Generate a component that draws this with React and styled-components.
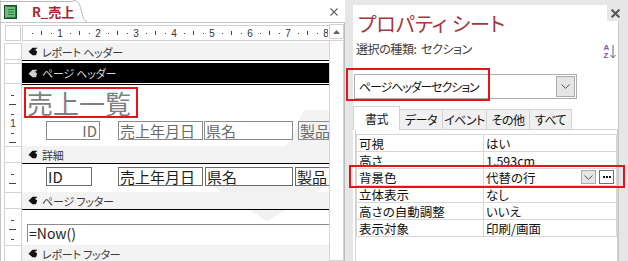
import React from 'react';
import styled, { createGlobalStyle } from 'styled-components';

const FONT = `"Noto Sans CJK JP", "Noto Sans", sans-serif`;

const Global = createGlobalStyle`
  html, body { margin: 0; padding: 0; background: #e6e6e6; }
  body { font-family: ${FONT}; font-feature-settings: "palt"; }
  * { box-sizing: border-box; }
`;

const Root = styled.div`
  position: relative;
  width: 628px;
  height: 261px;
  overflow: hidden;
  display: flex;
  background: #e6e6e6;
`;

/* ---------------- Left: report designer ---------------- */
const Editor = styled.div`
  width: 345px;
  height: 261px;
  flex: none;
  display: flex;
  flex-direction: column;
  background: #fff;
  border-left: 1px solid #c6c6c6;
`;

const DocTabBar = styled.div`
  height: 23px;
  flex: none;
  display: flex;
  align-items: flex-end;
  border-bottom: 1px solid #c6c6c6;
`;

const DocTab = styled.div`
  height: 21px;
  width: 72px;
  flex: none;
  display: flex;
  align-items: center;
  padding-left: 3px;
  border-top: 1px solid #b8b8b8;
  background: #fff;
  white-space: nowrap;
`;

const DocTabTitle = styled.span`
  margin-left: 15px;
  font-size: 13px;
  line-height: 16px;
  font-weight: 700;
  color: #a4262c;
  white-space: nowrap;
  position: relative;
  z-index: 1;
`;

const DocClose = styled.div`
  margin-left: auto;
  align-self: flex-start;
  margin-top: 8px;
  margin-right: 7px;
  width: 8px;
  height: 8px;
  display: flex;
`;

const EditorBody = styled.div`
  flex: 1;
  display: flex;
  min-height: 0;
`;

const ContentColumn = styled.div`
  position: relative;
  width: 328px;
  display: flex;
  flex-direction: column;
  overflow: hidden;
`;

const Watermark = styled.svg`
  position: absolute;
  left: 0;
  top: 0;
  z-index: 0;
`;

const RulerRow = styled.div`
  position: relative;
  z-index: 1;
  display: flex;
  height: 16px;
  margin-top: 2px;
  margin-bottom: 2px;
  flex: none;
`;

const CornerBox = styled.div`
  width: 16px;
  margin-left: 4px;
  margin-right: 1px;
  border: 1px solid #d0d0d0;
  background: #fff;
`;

const HRuler = styled.div`
  width: 307px;
  border: 1px solid #d0d0d0;
  border-right: none;
  background: #fff;
  display: flex;
`;

const Row = styled.div`
  position: relative;
  z-index: 1;
  display: flex;
  flex: none;
  height: ${(p) => p.$h}px;
`;

const VCell = styled.div`
  width: 18px;
  margin-left: 3px;
  flex: none;
  background: #fff;
  border-left: 1px solid #d4d4d4;
  border-right: 1px solid #d4d4d4;
  ${(p) => p.$box && 'border-top: 1px solid #d4d4d4; border-bottom: 1px solid #d4d4d4;'}
  display: flex;
`;

const SectionBar = styled.div`
  width: 307px;
  height: 100%;
  display: flex;
  align-items: center;
  gap: 4px;
  padding-left: 6px;
  font-size: 11px;
  letter-spacing: -0.2px;
  background: ${(p) => (p.$selected ? '#000' : '#f3f3f3')};
  color: ${(p) => (p.$selected ? '#d8d8d8' : '#3a3a3a')};
  border-bottom: ${(p) => (p.$selected ? '1px solid #fff' : 'none')};
  white-space: nowrap;
`;

const SectionBody = styled.div`
  position: relative;
  width: 307px;
  height: 100%;
  border-top: 1px solid #000;
  overflow: hidden;
`;

const TitleLabel = styled.div`
  position: absolute;
  left: 2px;
  top: 2px;
  width: 114px;
  height: 31px;
  border: 2px solid #e3151a;
  font-size: 26px;
  line-height: 27px;
  padding-left: 1px;
  color: #7f7f7f;
  white-space: nowrap;
`;

const Ctl = styled.div`
  position: absolute;
  left: ${(p) => p.$x}px;
  top: ${(p) => p.$y}px;
  width: ${(p) => p.$w}px;
  height: 19px;
  border: 1px solid ${(p) => (p.$label ? '#8c8c8c' : '#6a6a6a')};
  color: ${(p) => (p.$label ? '#6a6a6a' : '#1e1e1e')};
  font-size: 15px;
  line-height: 17px;
  padding: 0 2px 0 1px;
  white-space: nowrap;
  overflow: hidden;
  text-align: ${(p) => (p.$right ? 'right' : 'left')};
`;

const NowBox = styled.div`
  position: absolute;
  left: 5px;
  top: 14px;
  right: 0;
  height: 18px;
  border-top: 1px solid #8c8c8c;
  border-left: 1px solid #8c8c8c;
  font-size: 14px;
  line-height: 16px;
  padding-left: 1px;
  color: #222;
`;

const Scrollbar = styled.div`
  width: 16px;
  flex: none;
  display: flex;
  flex-direction: column;
  padding-top: 1px;
  border-right: 1px solid #bcbcbc;
  background: #fff;
`;

const ScrollBtn = styled.div`
  height: 15px;
  border: 1px solid #d0d0d0;
  display: flex;
  align-items: center;
  justify-content: center;
  background: #fff;
`;

const ScrollThumb = styled.div`
  flex: 1;
  margin-top: 1px;
  border: 1px solid #d4d4d4;
  background: #fff;
`;

/* ---------------- Right: property sheet ---------------- */
const Gap = styled.div`
  width: 8px;
  flex: none;
`;

const PropPanel = styled.div`
  position: relative;
  width: 275px;
  flex: none;
  padding-top: 5px;
  padding-right: 9px;
  background: #e6e6e6;
`;

const PanelBody = styled.div`
  height: 100%;
  background: #fff;
  border-right: 1px solid #c6c6c6;
  display: flex;
  flex-direction: column;
`;

const PanelClose = styled.div`
  position: absolute;
  left: 254px;
  top: 5px;
  width: 16px;
  height: 16px;
  background: #e6e6e6;
  display: flex;
  align-items: center;
  justify-content: center;
`;

const PanelTitle = styled.div`
  margin-top: 6px;
  padding-left: 5px;
  font-size: 20px;
  line-height: 26px;
  color: #a5373b;
  white-space: nowrap;
`;

const SubRow = styled.div`
  margin-top: 2px;
  height: 18px;
  display: flex;
  align-items: center;
  justify-content: space-between;
  padding-left: 3px;
  padding-right: 2px;
  font-size: 12px;
  letter-spacing: -0.4px;
  color: #3a3a3a;
`;

const SortIcon = styled.div`
  display: flex;
  align-items: center;
  gap: 1px;
  margin-top: 8px;
`;

const SortLetters = styled.div`
  display: flex;
  flex-direction: column;
  font-family: "Liberation Sans", sans-serif;
  font-size: 8px;
  line-height: 8px;
  font-weight: 700;
  color: #7d55b0;
`;

const Combo = styled.div`
  margin-top: 17px;
  margin-left: 1px;
  width: 223px;
  height: 25px;
  border: 1px solid #abadb3;
  display: flex;
  align-items: center;
  padding-left: 4px;
  font-size: 12px;
  letter-spacing: -1.1px;
  color: #111;
`;

const ComboText = styled.span`
  flex: 1;
  white-space: nowrap;
`;

const DropBtn = styled.div`
  width: ${(p) => p.$w || 19}px;
  height: ${(p) => p.$h || 21}px;
  margin-right: 1px;
  border: 1px solid #acacac;
  background: #e5e5e5;
  display: flex;
  align-items: center;
  justify-content: center;
  flex: none;
`;

const Tabs = styled.div`
  margin-top: 6px;
  display: flex;
  align-items: flex-end;
  height: 24px;
  flex: none;
`;

const Tab = styled.div`
  width: ${(p) => p.$w}px;
  height: ${(p) => (p.$active ? 24 : 20)}px;
  margin-left: ${(p) => (p.$first ? 0 : -1)}px;
  margin-bottom: ${(p) => (p.$active ? -1 : 0)}px;
  position: relative;
  z-index: ${(p) => (p.$active ? 2 : 1)};
  border: 1px solid #d2d2d2;
  border-bottom: none;
  background: ${(p) => (p.$active ? '#fff' : '#f0f0f0')};
  display: flex;
  align-items: center;
  justify-content: center;
  font-size: 12px;
  letter-spacing: -0.5px;
  color: #111;
  white-space: nowrap;
`;

const TabContent = styled.div`
  flex: 1;
  margin-left: 2px;
  border: 1px solid #d2d2d2;
  border-bottom: none;
  padding-top: 4px;
`;

const Grid = styled.div`
  display: grid;
  grid-template-columns: 127px 1fr;
  border-top: 1px solid #d7d7d7;
  border-left: 1px solid #d7d7d7;
`;

const Cell = styled.div`
  height: 17px;
  border-bottom: 1px solid #d7d7d7;
  border-right: 1px solid #d7d7d7;
  padding-left: 2px;
  font-size: 12.5px;
  line-height: 15px;
  color: #111;
  display: flex;
  align-items: center;
  gap: 2px;
  white-space: nowrap;
`;

const CellText = styled.span`
  flex: 1;
`;

const DotsBtn = styled.div`
  width: 15px;
  height: 14px;
  margin-right: 2px;
  border: 1px solid #707070;
  background: #fff;
  display: flex;
  align-items: center;
  justify-content: center;
  gap: 1px;
  flex: none;
`;

const Dot = styled.span`
  width: 2px;
  height: 2px;
  background: #111;
`;

const Mark = styled.div`
  position: absolute;
  left: ${(p) => p.$x}px;
  top: ${(p) => p.$y}px;
  width: ${(p) => p.$w}px;
  height: ${(p) => p.$h}px;
  border: 2px solid #e3151a;
  pointer-events: none;
  z-index: 5;
`;

/* ---------------- drawings ---------------- */
const ReportIcon = () => (
  <svg width="13" height="14" viewBox="0 0 13 14" style={{ flex: 'none' }}>
    <rect x="0.5" y="0.5" width="12" height="13" fill="#217a3a" stroke="#135227" />
    <rect x="3" y="2" width="8" height="10" fill="#6fbf7c" />
    <rect x="1.5" y="1.5" width="1" height="11" fill="#c9e8cf" />
    <rect x="4" y="4" width="6" height="1" fill="#2a7d3d" />
    <rect x="4" y="6.5" width="6" height="1" fill="#2a7d3d" />
    <rect x="4" y="9" width="6" height="1" fill="#2a7d3d" />
  </svg>
);

const TabWing = () => (
  <svg width="14" height="22" viewBox="0 0 14 22" style={{ display: 'block', alignSelf: 'flex-end', flex: 'none' }}>
    <path d="M0 1 H1 C6 1 7 6 8.5 11 C10 17 11 21.5 14 21.5 L14 22 L0 22 Z" fill="#fff" />
    <path d="M0 0.5 H1 C6 0.5 7 6 8.5 11 C10 17 11 21.5 14 21.5" fill="none" stroke="#b8b8b8" />
  </svg>
);

const XIcon = ({ size = 8, color = '#666', w = 1.2 }) => (
  <svg width={size} height={size} viewBox="0 0 8 8">
    <path d="M0.5 0.5 L7.5 7.5 M7.5 0.5 L0.5 7.5" stroke={color} strokeWidth={w} />
  </svg>
);

const BarIcon = ({ color }) => (
  <svg width="10" height="9" viewBox="0 0 10 9" style={{ flex: 'none' }}>
    <path d="M0.5 4.8 L4.5 0.8 H9.2 L8 2.6 H6.5 L9.2 4.6 L8 8.3 H4.5 Z" fill={color} />
  </svg>
);

const Chevron = () => (
  <svg width="9" height="5" viewBox="0 0 9 5">
    <path d="M0.5 0.5 L4.5 4.3 L8.5 0.5" fill="none" stroke="#555" strokeWidth="1" />
  </svg>
);

const cm = 38;
const HRulerMarks = () => {
  const items = [];
  for (let i = 0; i < 9; i++) {
    const x0 = i * cm - 1;
    if (i > 0)
      items.push(
        <text key={'t' + i} x={x0} y={11} textAnchor="middle" fontSize="10" fill="#333" fontFamily="Liberation Sans, sans-serif">
          {i}
        </text>
      );
    [1, 2, 3].forEach((q) => {
      const x = Math.round(x0 + (q * cm) / 4);
      if (x > 303) return;
      if (q === 2) items.push(<rect key={`h${i}`} x={x} y={5} width={1} height={4} fill="#444" />);
      else items.push(<rect key={`q${i}${q}`} x={x} y={7} width={1} height={1} fill="#444" />);
    });
  }
  return (
    <svg width="305" height="14" style={{ display: 'block' }}>
      {items}
    </svg>
  );
};

const VTicks = ({ h }) => {
  const items = [];
  for (let k = 1; 1 + k * 9.5 < h - 2; k++) {
    const y = Math.round(1 + k * 9.5);
    if (k % 4 === 0)
      items.push(
        <text key={k} x={8} y={y + 4} textAnchor="middle" fontSize="10" fill="#333" fontFamily="Liberation Sans, sans-serif">
          {k / 4}
        </text>
      );
    else if (k % 2 === 0) items.push(<rect key={k} x={4} y={y} width={7} height={1} fill="#444" />);
    else items.push(<rect key={k} x={6} y={y} width={3} height={1} fill="#444" />);
  }
  return (
    <svg width="16" height={h} style={{ display: 'block' }}>
      {items}
    </svg>
  );
};

const Bar = ({ label, selected, h = 17 }) => (
  <Row $h={h}>
    <VCell $box />
    <SectionBar $selected={selected}>
      <BarIcon color={selected ? '#cfcfcf' : '#111'} />
      {label}
    </SectionBar>
  </Row>
);

const Body = ({ h, ticks = true, children }) => (
  <Row $h={h}>
    <VCell>{ticks && <VTicks h={h} />}</VCell>
    <SectionBody>{children}</SectionBody>
  </Row>
);

const props = [
  ['可視', 'はい'],
  ['高さ', '1.593cm'],
  ['背景色', '代替の行', true],
  ['立体表示', 'なし'],
  ['高さの自動調整', 'いいえ'],
  ['表示対象', '印刷/画面'],
];

const tabs = [
  ['書式', 47, true],
  ['データ', 44],
  ['イベント', 45],
  ['その他', 44],
  ['すべて', 43],
];

export default function App() {
  return (
    <Root>
      <Global />
      <Editor>
        <DocTabBar>
          <DocTab>
            <ReportIcon />
            <DocTabTitle>R_売上</DocTabTitle>
          </DocTab>
          <TabWing />
          <DocClose>
            <XIcon />
          </DocClose>
        </DocTabBar>
        <EditorBody>
          <ContentColumn>
            <Watermark width="328" height="238" viewBox="1 23 328 238">
              <polygon points="286,146 304,110 329,110 329,146" fill="#f3f3f3" />
              <polygon points="212,186 326,186 267,221" fill="#f1f1f1" />
            </Watermark>
            <RulerRow>
              <CornerBox />
              <HRuler>
                <HRulerMarks />
              </HRuler>
            </RulerRow>
            <Bar label="レポート ヘッダー" />
            <Body h={3} ticks={false} />
            <Bar label="ページ ヘッダー" selected h={21} />
            <Body h={62}>
              <TitleLabel>売上一覧</TitleLabel>
              <Ctl $label $right $x={24} $y={36} $w={54}>ID</Ctl>
              <Ctl $label $x={96} $y={36} $w={85}>売上年月日</Ctl>
              <Ctl $label $x={182} $y={36} $w={89}>県名</Ctl>
              <Ctl $label $x={276} $y={36} $w={50}>製品</Ctl>
            </Body>
            <Bar label="詳細" />
            <Body h={29}>
              <Ctl $x={24} $y={3} $w={46}>ID</Ctl>
              <Ctl $x={96} $y={3} $w={85}>売上年月日</Ctl>
              <Ctl $x={183} $y={3} $w={88}>県名</Ctl>
              <Ctl $x={273} $y={3} $w={50}>製品</Ctl>
            </Body>
            <Bar label="ページ フッター" />
            <Body h={36}>
              <NowBox>=Now()</NowBox>
            </Body>
            <Bar label="レポート フッター" />
          </ContentColumn>
          <Scrollbar>
            <ScrollBtn>
              <svg width="7" height="4" viewBox="0 0 7 4">
                <path d="M0 4 L3.5 0 L7 4 Z" fill="#606060" />
              </svg>
            </ScrollBtn>
            <ScrollThumb />
          </Scrollbar>
        </EditorBody>
      </Editor>

      <Gap />

      <PropPanel>
        <PanelBody>
          <PanelTitle>プロパティ シート</PanelTitle>
          <SubRow>
            <span>選択の種類:&nbsp; セクション</span>
            <SortIcon>
              <SortLetters>
                <span>A</span>
                <span>Z</span>
              </SortLetters>
              <svg width="6" height="14" viewBox="0 0 6 14">
                <path d="M3 0 V13 M0.5 10 L3 13 L5.5 10" fill="none" stroke="#666" strokeWidth="1" />
              </svg>
            </SortIcon>
          </SubRow>
          <Combo>
            <ComboText>ページヘッダーセクション</ComboText>
            <DropBtn>
              <Chevron />
            </DropBtn>
          </Combo>
          <Tabs>
            {tabs.map(([t, w, a], i) => (
              <Tab key={t} $w={w} $active={a} $first={i === 0}>
                {t}
              </Tab>
            ))}
          </Tabs>
          <TabContent>
            <Grid>
              {props.map(([k, v, btns]) => (
                <React.Fragment key={k}>
                  <Cell>{k}</Cell>
                  <Cell>
                    <CellText>{v}</CellText>
                    {btns && (
                      <>
                        <DropBtn $w={15} $h={14}>
                          <Chevron />
                        </DropBtn>
                        <DotsBtn>
                          <Dot />
                          <Dot />
                          <Dot />
                        </DotsBtn>
                      </>
                    )}
                  </Cell>
                </React.Fragment>
              ))}
            </Grid>
          </TabContent>
        </PanelBody>
        <PanelClose>
          <XIcon size={9} color="#555" w={1.8} />
        </PanelClose>
      </PropPanel>

      <Mark $x={346} $y={68} $w={144} $h={33} />
      <Mark $x={349} $y={165} $w={276} $h={23} />
    </Root>
  );
}
